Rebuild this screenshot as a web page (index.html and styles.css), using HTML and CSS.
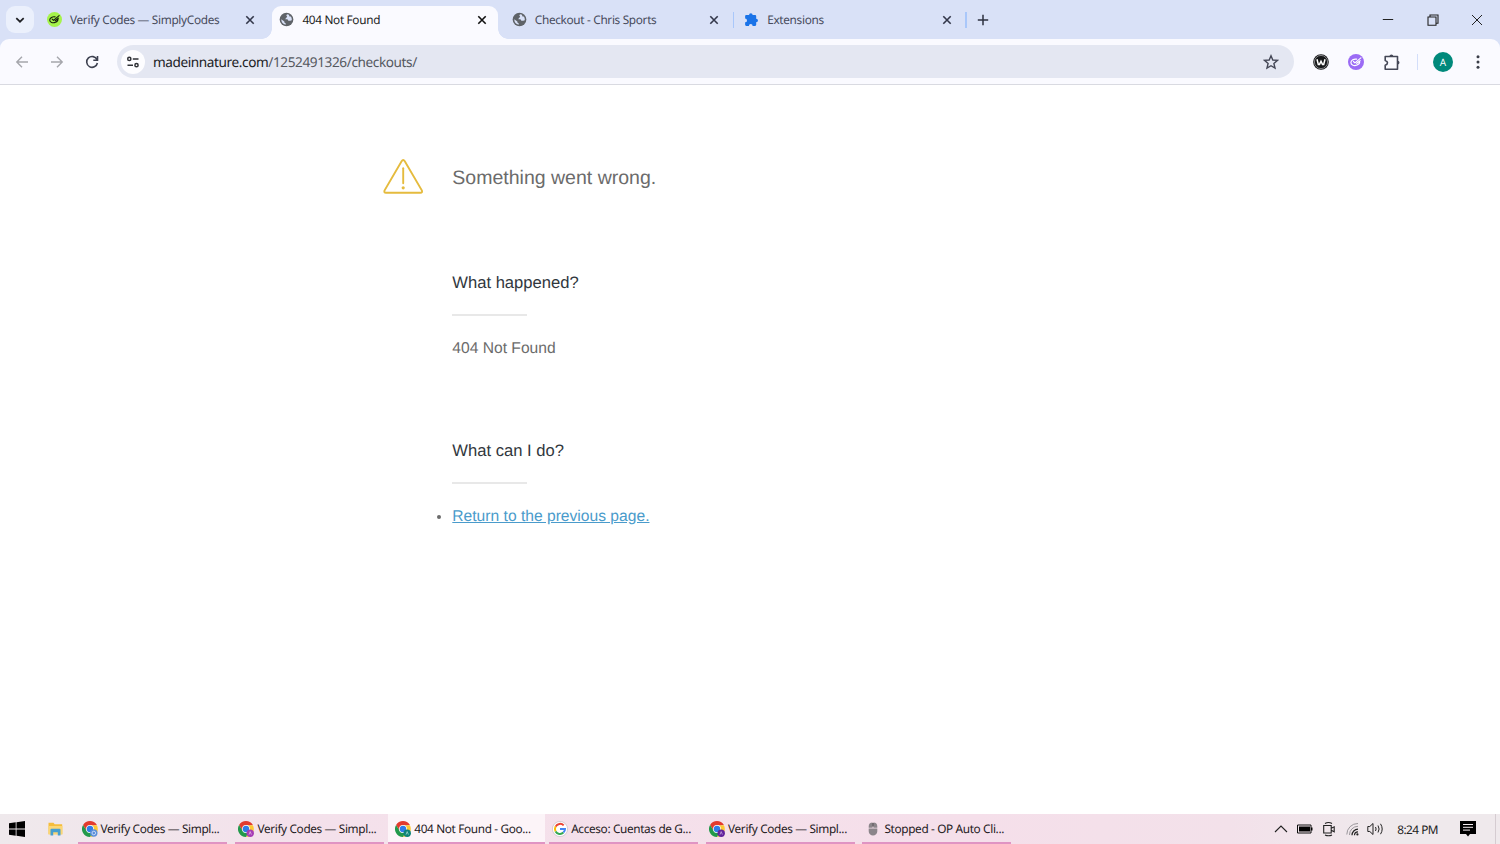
FILE: index.html
```html
<!DOCTYPE html>
<html lang="en">
<head>
<meta charset="UTF-8">
<meta name="viewport" content="width=device-width, initial-scale=1.0">
<title>404 Not Found</title>
<link rel="stylesheet" href="styles.css">
</head>
<body>

<!-- shared icons -->
<svg class="defs" width="0" height="0">
  <symbol id="globe" viewBox="0 0 16 16">
    <circle cx="8" cy="8" r="7.300" fill="#5f6368"/>
    <path d="M9.200 2.300C8.100 2.700 7.400 3.500 8.200 4.300c.9.700.4 1.400-.4 1.700-1 .4-.3 1.300-1.300 1.600H8.600c1.300.2.9 1.700 2.100 1.800 1 .1 1.500-.3 2.900-.7.200-1.700-.2-2.900-1-4-.9.500-2-.1-1.700-1 .1-.5-.6-1.200-1.700-1.400zM2.400 7.700c-.1 3 2 5.400 4.700 5.900V12c-1-.2-1.500-.8-1.400-1.800z" fill="#d9e1f7"/>
  </symbol>
  <symbol id="close" viewBox="0 0 10 10">
    <path d="M1.300 1.300l7.400 7.400M8.700 1.300L1.300 8.700" stroke="currentColor" stroke-width="1.600" fill="none"/>
  </symbol>
  <symbol id="simply" viewBox="0 0 16 16">
    <circle cx="8" cy="8" r="8" fill="var(--badge)"/>
    <path d="M8.600 5.200C5.800 4.700 3 6.200 2.900 8.600c0 2.600 3.300 3.600 6.200 2.400 1.900-.8 2.700-2.100 2.600-3.500M5.500 7.500l1.400 1.400 6-5M8.700 9.300l3.400-2.700" stroke="var(--ink)" stroke-width="1.200" fill="none" stroke-linecap="round" stroke-linejoin="round"/>
  </symbol>
  <symbol id="chrome" viewBox="0 0 16 16">
    <path d="M8 4.300h6.900A8 8 0 0 1 8 16l3.200-6.200z" fill="#fcc934"/>
    <path d="M1.070 4L4.800 9.900 8 11.600V4.300L14.900 4A8 8 0 0 0 1.070 4z" fill="#e33b2e"/>
    <path d="M1.070 4L4.800 9.900 11.200 9.800 8 16A8 8 0 0 1 1.070 4z" fill="#22994b"/>
    <circle cx="8" cy="8" r="3.900" fill="#fff"/>
    <circle cx="8" cy="8" r="3.200" fill="#2f7de9"/>
  </symbol>
</svg>

<div class="tabstrip">
  <button class="tab-search">
    <svg width="10" height="10" viewBox="0 0 10 10"><path d="M1.300 3.100L5 6.700l3.700-3.600" fill="none" stroke="#1f2024" stroke-width="1.700"/></svg>
  </button>

  <div class="tab">
    <svg class="favicon green"><use href="#simply"/></svg>
    <span class="tab-title">Verify Codes — SimplyCodes</span>
    <svg class="tab-close"><use href="#close"/></svg>
  </div>
  <div class="tab active">
    <svg class="favicon"><use href="#globe"/></svg>
    <span class="tab-title">404 Not Found</span>
    <svg class="tab-close"><use href="#close"/></svg>
  </div>
  <div class="tab">
    <svg class="favicon"><use href="#globe"/></svg>
    <span class="tab-title">Checkout - Chris Sports</span>
    <svg class="tab-close"><use href="#close"/></svg>
  </div>
  <span class="divider"></span>
  <div class="tab">
    <svg class="favicon" viewBox="0 0 16 16"><path d="M1.200 4.300q0-1.200 1.200-1.200h3a1.900 1.900 0 0 1 3.800 0h2.600q1.200 0 1.200 1.200v2.900a1.900 1.900 0 0 1 0 3.800v2.700q0 1.200-1.200 1.200H9.200a2 2 0 0 0-4 0H2.400q-1.200 0-1.200-1.200V11a2 2 0 0 0 0-4z" fill="#1a73e8"/></svg>
    <span class="tab-title">Extensions</span>
    <svg class="tab-close"><use href="#close"/></svg>
  </div>
  <span class="divider"></span>
  <button class="new-tab">
    <svg width="12" height="12" viewBox="0 0 12 12"><path d="M6 .8v10.400M.8 6h10.400" stroke="#2c3040" stroke-width="1.500"/></svg>
  </button>

  <div class="window-buttons">
    <svg width="12" height="12" viewBox="0 0 12 12"><path d="M.8 5.500h10.400" stroke="#222" stroke-width="1"/></svg>
    <svg width="12" height="12" viewBox="0 0 12 12"><path d="M1 3h8v8.200H1zM3 3V1h8v8.200H9" fill="none" stroke="#222" stroke-width="1.100"/></svg>
    <svg width="12" height="12" viewBox="0 0 12 12"><path d="M1 1l10 10M11 1L1 11" stroke="#222" stroke-width="1"/></svg>
  </div>
</div>

<div class="toolbar-wrap">
<div class="toolbar">
  <div class="nav-buttons">
    <svg width="14" height="14" viewBox="0 0 14 14"><path d="M13 7H2M7 1.800L1.800 7 7 12.200" fill="none" stroke="#a5a6ac" stroke-width="1.400"/></svg>
    <svg width="14" height="14" viewBox="0 0 14 14"><path d="M1 7h11M7 1.800L12.200 7 7 12.200" fill="none" stroke="#a5a6ac" stroke-width="1.400"/></svg>
    <svg width="14" height="14" viewBox="0 0 14 14"><path d="M12 4.600A5.400 5.400 0 1 0 12.400 8M12.500 1v4.200H8.300" fill="none" stroke="#3d4150" stroke-width="1.600"/></svg>
  </div>
  <div class="omnibox">
    <span class="site-info">
      <svg width="14" height="14" viewBox="0 0 14 14" fill="none" stroke="#2f3136" stroke-width="1.500"><circle cx="3.300" cy="3.900" r="1.600"/><path d="M6.800 3.900h5.700M1.500 10.200h5.500"/><circle cx="10.500" cy="10.200" r="1.600"/></svg>
    </span>
    <span class="url">madeinnature.com<span class="path">/1252491326/checkouts/</span></span>
    <svg class="star" width="16" height="16" viewBox="0 0 16 16"><path d="M8 1.800l1.800 4.200 4.700.4-3.600 3.100 1.100 4.600L8 11.700l-4 2.400 1.100-4.600L1.500 6.400 6.200 6z" fill="none" stroke="#444756" stroke-width="1.400" stroke-linejoin="miter"/></svg>
  </div>
  <div class="toolbar-icons">
    <svg width="16" height="16" viewBox="0 0 16 16"><circle cx="8" cy="8" r="7.800" fill="#17181a"/><circle cx="8" cy="8" r="6.600" fill="none" stroke="#c9cace" stroke-width=".6"/><path d="M4 5.200l1.300 5.200h1.200L8 7.200l1.500 3.200h1.200L12 5.200" fill="none" stroke="#fff" stroke-width="1.500"/></svg>
    <svg class="purple" width="16" height="16"><use href="#simply"/></svg>
    <svg width="18" height="18" viewBox="0 0 18 18"><path d="M2.200 3.500h12.300v12.700H2.200v-4q2.300-.6 2.300-2.400T2.200 7.400z" fill="none" stroke="#444756" stroke-width="1.600" stroke-linejoin="round"/><path d="M6.500 3.300a1.900 1.900 0 0 1 3.800 0zM14.600 7.700a1.900 1.900 0 0 1 0 3.800z" fill="#444756"/></svg>
    <span class="divider"></span>
    <span class="avatar">A</span>
    <svg class="menu" width="4" height="16" viewBox="0 0 4 16" fill="#3a3d48"><circle cx="2" cy="2.700" r="1.500"/><circle cx="2" cy="8" r="1.500"/><circle cx="2" cy="13.300" r="1.500"/></svg>
  </div>
</div>
</div>

<main class="page">
  <div class="error-header">
    <svg width="40" height="36" viewBox="0 0 40 36"><path d="M18.600 2.200q1.600-2.400 3.200 0l17 29.100q.9 2.500-1.400 2.500H3q-2.300 0-1.400-2.500z" fill="none" stroke="#e5bb3e" stroke-width="1.900"/><path d="M20.200 9.300v15" stroke="#e5bb3e" stroke-width="1.900" stroke-linecap="round"/><circle cx="20.200" cy="28.800" r="1.600" fill="#e5bb3e"/></svg>
    <h1>Something went wrong.</h1>
  </div>
  <section>
    <h2>What happened?</h2>
    <p>404 Not Found</p>
  </section>
  <section>
    <h2>What can I do?</h2>
    <ul>
      <li><a href="#">Return to the previous page.</a></li>
    </ul>
  </section>
</main>

<div class="taskbar">
  <svg class="start" width="16" height="16" viewBox="0 0 16 16"><path d="M0 2.200L6.700 1.300v6.300H0zM7.500 1.200L16 0v7.600H7.500zM0 8.400h6.700v6.300L0 13.800zM7.500 8.400H16V16l-8.500-1.200z" fill="#000"/></svg>
  <svg class="explorer" width="15" height="14" viewBox="0 0 15 14"><path d="M.5.800h5l1.200 1.500h7.500v10H.5z" fill="#f5bd3a"/><path d="M.5 4h14v8.300H.5z" fill="#fbd776"/><path d="M2.500 13.500V7.700q0-1 1-1h8q1 0 1 1v5.800H9.800v-3.300H5.200v3.300z" fill="#479fd0"/></svg>

  <div class="task">
    <svg class="task-icon"><use href="#chrome"/><circle cx="11.800" cy="12" r="3.700" fill="#5b8fd8"/><circle cx="11.800" cy="12" r="1.800" fill="none" stroke="#dce9ff" stroke-width=".8"/></svg>
    <span>Verify Codes — Simpl...</span>
  </div>
  <div class="task">
    <svg class="task-icon"><use href="#chrome"/><circle cx="12.200" cy="12.200" r="3.700" fill="#a63cb5"/><path d="M11 13.600l1.200-3 1.200 3" fill="none" stroke="#e9c5ee" stroke-width=".7"/></svg>
    <span>Verify Codes — Simpl...</span>
  </div>
  <div class="task current">
    <svg class="task-icon"><use href="#chrome"/><circle cx="12.200" cy="12.200" r="3.700" fill="#0b8577"/><path d="M11 13.600l1.200-3 1.200 3" fill="none" stroke="#b5e0da" stroke-width=".7"/></svg>
    <span>404 Not Found - Goo...</span>
  </div>
  <div class="task">
    <svg class="task-icon" viewBox="0 0 16 16"><circle cx="8" cy="8" r="7.600" fill="#fff" stroke="#c5bfc4" stroke-width=".7"/><g fill="none" stroke-width="2"><path d="M11.700 4.400A5 5 0 0 0 3.600 5.600" stroke="#ea4335"/><path d="M3.600 5.600a5 5 0 0 0 0 4.800" stroke="#fbbc05"/><path d="M3.600 10.400a5 5 0 0 0 7.800 1.200" stroke="#34a853"/><path d="M11.400 11.600A5 5 0 0 0 13 8H8" stroke="#4285f4"/></g></svg>
    <span>Acceso: Cuentas de G...</span>
  </div>
  <div class="task">
    <svg class="task-icon"><use href="#chrome"/><circle cx="12.200" cy="12.200" r="3.700" fill="#63229c"/><path d="M11 13.600l1.200-3 1.200 3" fill="none" stroke="#d0b4e6" stroke-width=".7"/></svg>
    <span>Verify Codes — Simpl...</span>
  </div>
  <div class="task clicker">
    <svg class="task-icon" viewBox="0 0 16 16"><path d="M3.700 6.800V5.500Q3.700 1.500 7.600 1.500V6.800zM8.400 1.500q3.900 0 3.900 4v1.300H8.400zM3.700 7.500h8.600v2.700a4.300 4.300 0 0 1-8.600 0z" fill="#8b858a"/><path d="M8 2v3.500" stroke="#5d595c" stroke-width="1.500"/></svg>
    <span>Stopped - OP Auto Cli...</span>
  </div>

  <div class="tray">
    <svg width="14" height="16" viewBox="0 0 14 16"><path d="M1 11l6-6 6 6" fill="none" stroke="#222" stroke-width="1.100"/></svg>
    <svg class="battery" width="16" height="16" viewBox="0 0 16 16"><path d="M.5 4h13.500v8H.5z" fill="none" stroke="#111" stroke-width="1"/><path d="M2 5.500h11v5H2zM14 6.500h1.500v3H14z" fill="#000"/></svg>
    <svg class="meet" width="12" height="16" viewBox="0 0 12 16"><path d="M.7 4.500h7.500v7.500H.7zM8.200 7.300l3-1.500v5l-3-1.500M2 2.500q3.500-2 7 0M2 14q3.500 1.600 7 0" fill="none" stroke="#222" stroke-width="1.100"/></svg>
    <svg class="wifi" width="13" height="16" viewBox="0 0 13 16" fill="none"><path d="M.8 13.500A11 11 0 0 1 12 2.500M3.500 14A8.500 8.500 0 0 1 12 5.300" stroke="#99959a" stroke-width="1"/><path d="M6 14.200A6 6 0 0 1 12 8.200M8.500 14.200A3.500 3.500 0 0 1 12 10.800" stroke="#222" stroke-width="1.200"/><circle cx="11.400" cy="13.400" r="1.100" fill="#222"/></svg>
    <svg class="sound" width="17" height="16" viewBox="0 0 17 16" fill="none" stroke="#222"><path d="M.8 5.500h2L6 2.500v11l-3.200-3h-2zM8.500 6q1.200 2 0 4M11 4.500q2.200 3.500 0 7M13.500 2.800q3.400 5.200 0 10.400"/></svg>
    <span class="clock">8:24 PM</span>
    <svg class="notes" width="16" height="16" viewBox="0 0 16 16"><path d="M0 0h16v13H10l-2 2.500L6 13H0z" fill="#000"/><path d="M3 3.500h10M3 6.300h10M3 9.100h7" stroke="#f5edf1" stroke-width="1"/></svg>
  </div>
</div>

</body>
</html>
```
FILE: styles.css
```css
* {
  box-sizing: border-box;
}
body {
  margin: 0;
  height: 100vh;
  overflow: hidden;
  display: flex;
  flex-direction: column;
  background-color: #fff;
  font-family: "Noto Sans", sans-serif;
  text-rendering: geometricPrecision;
}
button {
  border: none;
  padding: 0;
  background: none;
}
svg {
  display: block;
  flex-shrink: 0;
}
.defs {
  position: absolute;
}

/* tabs */
.tabstrip {
  display: flex;
  align-items: center;
  height: 39px;
  padding-left: 6px;
  background-color: #d9e1f7;
}
.tab-search {
  display: flex;
  align-items: center;
  justify-content: center;
  width: 28px;
  height: 27px;
  margin-right: 5.500px;
  border-radius: 9px;
  background-color: #ebf0fc;
}
.tab {
  position: relative;
  display: flex;
  align-items: center;
  width: 226px;
  height: 33px;
  margin-top: 6px;
  margin-right: 6.400px;
  padding: 0 11px 6px 7.500px;
  color: #474b5c;
}
.tab.active {
  background-color: #fafaff;
  border-radius: 9px 9px 0 0;
  color: #1d1e24;
}
.tab.active::before,
.tab.active::after {
  content: "";
  position: absolute;
  bottom: 0;
  width: 10px;
  height: 10px;
}
.tab.active::before {
  left: -10px;
  background: radial-gradient(circle at 0 0, transparent 9.500px, #fafaff 10px);
}
.tab.active::after {
  right: -10px;
  background: radial-gradient(circle at 100% 0, transparent 9.500px, #fafaff 10px);
}
.favicon {
  width: 15px;
  height: 15px;
  margin-right: 8px;
}
.green {
  --badge: #a5f34b;
  --ink: #17200d;
}
.purple {
  --badge: #9b6bf5;
  --ink: #fff;
}
.tab-title {
  flex: 1;
  padding-top: 1px;
  font-size: 11.800px;
  letter-spacing: -0.320px;
  white-space: nowrap;
}
.tab-close {
  width: 10px;
  height: 10px;
  color: #33374a;
}
.tab.active .tab-close {
  color: #111;
}
.divider {
  width: 1.500px;
  height: 16px;
  background-color: #a9c7fa;
}
.tabstrip .divider {
  margin-left: -4px;
  margin-right: 2.500px;
}
.new-tab {
  margin-left: 8px;
}
.window-buttons {
  display: flex;
  gap: 32.500px;
  margin-left: auto;
  padding-right: 17px;
}

/* address bar */
.toolbar-wrap {
  background-color: #d9e1f7;
}
.toolbar {
  display: flex;
  align-items: center;
  height: 46px;
  padding-left: 14.500px;
  border-bottom: 1px solid #d9dae1;
  border-radius: 9px 9px 0 0;
  background-color: #fafaff;
}
.nav-buttons {
  display: flex;
  gap: 21px;
}
.omnibox {
  display: flex;
  align-items: center;
  width: 1177px;
  height: 33px;
  margin-left: 18.500px;
  padding: 0 15px 0 4px;
  border-radius: 17px;
  background-color: #e4e7f2;
}
.site-info {
  display: flex;
  align-items: center;
  justify-content: center;
  width: 24px;
  height: 24px;
  border-radius: 50%;
  background-color: #fdfdff;
}
.url {
  flex: 1;
  margin-left: 8px;
  font-size: 13.600px;
  letter-spacing: -0.400px;
  color: #202124;
}
.path {
  color: #55585f;
}
.toolbar-icons {
  display: flex;
  align-items: center;
  margin-left: 18.500px;
  gap: 19px;
}
.toolbar-icons .divider {
  margin-left: -3px;
  background-color: #d3defa;
}
.avatar {
  width: 20px;
  height: 20px;
  margin-left: -4px;
  border-radius: 50%;
  background-color: #00897b;
  color: #fff;
  font-size: 10px;
  line-height: 20px;
  text-align: center;
}
.menu {
  margin-left: 4px;
}

/* page */
.page {
  flex: 1;
  padding: 73px 0 0 383px;
  font-family: "Liberation Sans", Arial, sans-serif;
  font-size: 15.630px;
  line-height: 24px;
  color: #6b6b6b;
}
.error-header {
  display: flex;
  align-items: center;
  gap: 29.300px;
  height: 38px;
  margin-bottom: 75px;
}
h1 {
  margin: 0;
  padding-top: 2px;
  font-size: 19.530px;
  font-weight: normal;
}
section {
  height: 168px;
  margin-left: 69.300px;
}
h2 {
  margin: 0;
  font-size: 16.600px;
  font-weight: normal;
  color: #31373d;
}
h2::after {
  content: "";
  display: block;
  width: 75px;
  height: 1.500px;
  margin-top: 19px;
  background-color: #e8e8e8;
}
p,
ul {
  margin: 21px 0 0;
  padding: 0;
}
a {
  color: #4a9bcb;
}

/* taskbar */
.taskbar {
  display: flex;
  align-items: center;
  height: 30px;
  background: linear-gradient(to right, #efe9ec, #f4e1eb 20%, #f5dfea 65%, #f3e1ea 82%, #efe9ec 92%);
}
.start {
  margin-left: 9px;
}
.explorer {
  margin: 0 15px 0 23px;
}
.task {
  display: flex;
  align-items: center;
  gap: 3px;
  width: 149px;
  height: 30px;
  margin-right: 7.900px;
  padding-top: 1px;
  padding-left: 3.500px;
  border-bottom: 2px solid #e094c3;
  font-size: 11.800px;
  letter-spacing: -0.350px;
  color: #1e1a1d;
  white-space: nowrap;
}
.task.current {
  width: 157px;
  margin-left: -4px;
  margin-right: 3.900px;
  padding-left: 7.500px;
  background-color: #fcf4f8;
}
.task.clicker {
  gap: 3px;
  padding-left: 3px;
}
.task-icon {
  width: 16px;
  height: 16px;
}
.tray {
  display: flex;
  align-items: center;
  height: 30px;
  margin-left: auto;
  padding-right: 19px;
  border-right: 1px solid #d5ccd1;
  margin-right: 4px;
}
.battery {
  margin-left: 9px;
}
.meet {
  margin-left: 10px;
}
.wifi {
  margin-left: 11px;
}
.sound {
  margin-left: 8px;
}
.clock {
  margin: 0 22px 0 13px;
  padding-top: 1px;
  font-size: 11.800px;
  letter-spacing: -0.500px;
  color: #222;
  white-space: nowrap;
}
```
